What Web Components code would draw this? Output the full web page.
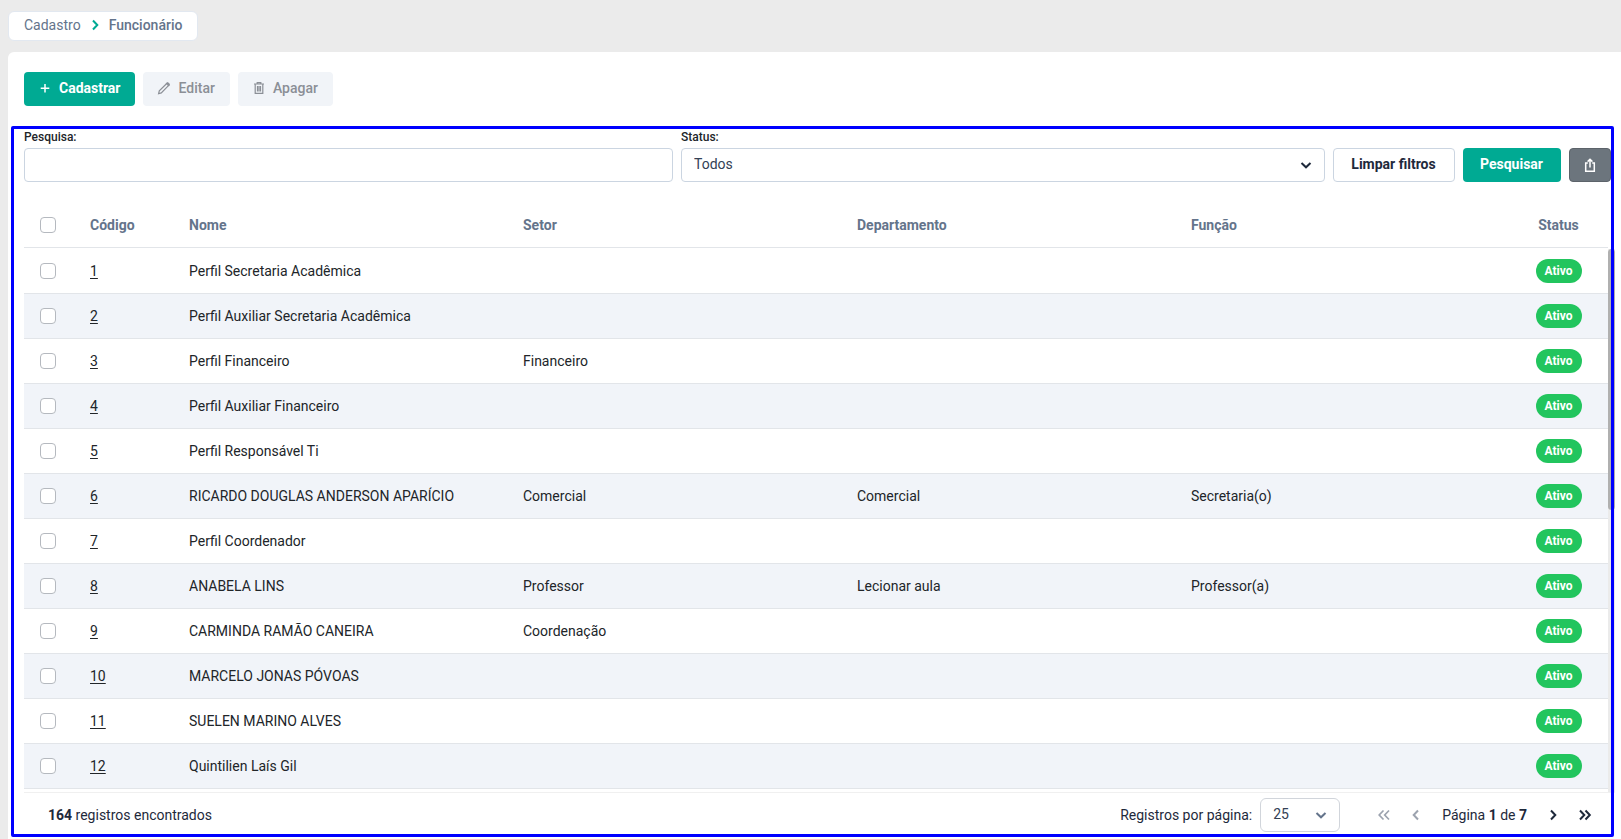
<!DOCTYPE html>
<html lang="pt-BR">
<head>
<meta charset="utf-8">
<title>Cadastro - Funcionário</title>
<style>
    body {
        margin: 0;
        background: #ebebeb;
        color: #212529;
        font: 14px/20px Roboto, "Liberation Sans", sans-serif;
    }
</style>
</head>
<body>

<pagina-cadastro></pagina-cadastro>

<script>
const icones = {
    mais: '<path d="M7 3v8.5M2.7 7.3h8.6" stroke-width="1.5"/>',
    lapis: '<path d="M1.6 12.6l.7-2.7L10 2.3q.8-.7 1.5 0l.4.4q.7.7 0 1.5L4.3 11.9z" stroke-width="1.2"/><path d="M9 2.6L11.6 5.200l1-1.200-2.200-2.400z" fill="currentColor" stroke-width=".5"/>',
    lixeira: '<path d="M2 3h10M5.200 2.800V1.700h3.600v1.100M3.200 3v9.300h7.600V3M5.500 5v5.500M7 5v5.500M8.500 5v5.500" stroke-width="1.2"/>',
    exportar: '<path d="M4.8 5H2.700v8.200h8.600V5H9.200M7 9.500V1.500M4.600 3.600L7 1.200l2.400 2.400" stroke-width="1.5"/>',
    direita: '<path d="M5 2.5L9.3 7 5 11.5" stroke-width="2"/>',
    esquerda: '<path d="M9 2.5L4.7 7 9 11.5" stroke-width="2"/>',
    primeira: '<path d="M6.5 2.5L2.2 7l4.3 4.5M12 2.5L7.7 7l4.3 4.5" stroke-width="1.7"/>',
    ultima: '<path d="M2 2.5L6.3 7 2 11.5M7.5 2.5L11.8 7l-4.3 4.5" stroke-width="2"/>',
    baixo: '<path d="M2.5 5L7 9.3 11.5 5" stroke-width="2"/>'
};

class IconeApp extends HTMLElement {

    constructor() {
        super();
        this.attachShadow({ mode: 'open' });
    }

    connectedCallback() {
        this.shadowRoot.innerHTML = `
            <style>
                :host { display: inline-flex; width: 14px; height: 14px; }
                svg { width: 100%; height: 100%; fill: none; stroke: currentColor; }
            </style>
            <svg viewBox="0 0 14 14" aria-hidden="true">${icones[this.getAttribute('nome')]}</svg>
        `;
    }
}

const template_botao = document.createElement('template');

template_botao.innerHTML = `
    <style>
        :host { display: inline-block; }

        button {
            display: flex;
            align-items: center;
            justify-content: center;
            gap: 7px;
            width: 100%;
            height: 34px;
            padding: 0 14px 2px 13px;
            border: 1px solid transparent;
            border-radius: 4px;
            font: 500 14px/20px Roboto, "Liberation Sans", sans-serif;
            white-space: nowrap;
            color: #8b8f96;
            background: #f1f4f8;
        }

        :host([tipo=primario]) button { background: #00aa93; color: white; font-weight: 700; }
        :host([tipo=contorno]) button { background: white; border-color: #cbd5e1; color: #1e293b; font-weight: 700; }
        :host([tipo=escuro]) button { background: #6c757d; border-color: #5c636a; color: white; padding: 0; }
    </style>

    <button type="button"><slot name="icone"></slot><slot></slot></button>
`;

class BotaoApp extends HTMLElement {

    constructor() {
        super();
        this.attachShadow({ mode: 'open' });
        this.shadowRoot.appendChild(template_botao.content.cloneNode(true));
    }

    connectedCallback() {
        const botao = this.shadowRoot.querySelector('button');

        botao.disabled = this.hasAttribute('desativado');

        if (this.getAttribute('rotulo')) {
            botao.setAttribute('aria-label', this.getAttribute('rotulo'));
        }
    }
}

const template_trilha = document.createElement('template');

template_trilha.innerHTML = `
    <style>
        :host { display: block; }

        nav {
            display: inline-flex;
            align-items: center;
            gap: 7px;
            box-sizing: border-box;
            height: 30px;
            padding: 0 15px 2px;
            border: 1px solid #e2e8f0;
            border-radius: 6px;
            background: white;
            color: #64748b;
        }

        a { color: inherit; text-decoration: none; }
        span { font-weight: 500; }
        icone-app { color: #00aa93; }
    </style>

    <nav aria-label="Trilha">
        <a href="#">Cadastro</a>
        <icone-app nome="direita"></icone-app>
        <span>Funcionário</span>
    </nav>
`;

class TrilhaNavegacao extends HTMLElement {

    constructor() {
        super();
        this.attachShadow({ mode: 'open' });
        this.shadowRoot.appendChild(template_trilha.content.cloneNode(true));
    }
}

const template_filtros = document.createElement('template');

template_filtros.innerHTML = `
    <style>
        :host { display: flex; align-items: flex-end; gap: 8px; }

        .campo { flex: 128; min-width: 0; }
        .campo.pesquisa { flex: 129; }

        label {
            display: block;
            padding-bottom: 3px;
            font-size: 12px;
            line-height: 16px;
            font-weight: 500;
        }

        input, select {
            display: block;
            box-sizing: border-box;
            width: 100%;
            height: 34px;
            padding: 0 12px 2px;
            border: 1px solid #cbd5e1;
            border-radius: 4px;
            background: white;
            color: #334155;
            font: inherit;
            appearance: none;
        }

        .selecao { display: grid; align-items: center; }
        .selecao > * { grid-area: 1 / 1; }
        .selecao icone-app { justify-self: end; margin-right: 12px; color: #1e293b; pointer-events: none; }

        .limpar { width: 122px; }
        .pesquisar { width: 98px; }
        .exportar { width: 42px; }
    </style>

    <div class="campo pesquisa">
        <label for="pesquisa">Pesquisa:</label>
        <input id="pesquisa" type="text">
    </div>

    <div class="campo">
        <label for="status">Status:</label>
        <div class="selecao">
            <select id="status"><option>Todos</option><option>Ativo</option><option>Inativo</option></select>
            <icone-app nome="baixo"></icone-app>
        </div>
    </div>

    <botao-app class="limpar" tipo="contorno">Limpar filtros</botao-app>
    <botao-app class="pesquisar" tipo="primario">Pesquisar</botao-app>
    <botao-app class="exportar" tipo="escuro" rotulo="Exportar"><icone-app slot="icone" nome="exportar"></icone-app></botao-app>
`;

class FiltrosBusca extends HTMLElement {

    constructor() {
        super();
        this.attachShadow({ mode: 'open' });
        this.shadowRoot.appendChild(template_filtros.content.cloneNode(true));
    }
}

const funcionarios = [
    [1, 'Perfil Secretaria Acadêmica', '', '', ''],
    [2, 'Perfil Auxiliar Secretaria Acadêmica', '', '', ''],
    [3, 'Perfil Financeiro', 'Financeiro', '', ''],
    [4, 'Perfil Auxiliar Financeiro', '', '', ''],
    [5, 'Perfil Responsável Ti', '', '', ''],
    [6, 'RICARDO DOUGLAS ANDERSON APARÍCIO', 'Comercial', 'Comercial', 'Secretaria(o)'],
    [7, 'Perfil Coordenador', '', '', ''],
    [8, 'ANABELA LINS', 'Professor', 'Lecionar aula', 'Professor(a)'],
    [9, 'CARMINDA RAMÃO CANEIRA', 'Coordenação', '', ''],
    [10, 'MARCELO JONAS PÓVOAS', '', '', ''],
    [11, 'SUELEN MARINO ALVES', '', '', ''],
    [12, 'Quintilien Laís Gil', '', '', '']
];

const template_tabela = document.createElement('template');

template_tabela.innerHTML = `
    <style>
        :host { display: flex; }

        .area { flex: 1; min-width: 0; padding-bottom: 3px; }

        table {
            width: 100%;
            table-layout: fixed;
            border-collapse: separate;
            border-spacing: 0;
        }

        th, td {
            height: 24px;
            padding: 10px 16px;
            border-bottom: 1px solid #e2e5e9;
            text-align: left;
            white-space: nowrap;
        }

        th { color: #64748b; font-weight: 700; }
        tbody tr:first-child td { padding-top: 11px; }
        tbody tr:nth-child(even) { background: #f1f4f9; }

        .marca { width: 18px; }
        .codigo, .status { width: 67px; }
        .status { text-align: center; }

        a { color: inherit; text-underline-offset: 2px; }

        input {
            display: block;
            appearance: none;
            box-sizing: border-box;
            width: 16px;
            height: 16px;
            margin: 0;
            border: 1px solid #b5b9bf;
            border-radius: 4px;
            background: white;
        }

        .etiqueta {
            display: block;
            width: 46px;
            margin: 0 auto;
            border-radius: 12px;
            background: #22c55e;
            color: white;
            font-size: 12px;
            line-height: 24px;
            font-weight: 700;
        }

        .trilho {
            width: 7px;
            margin-top: 46px;
            background: #ebebeb;
        }

        .trilho div { height: 48%; border-radius: 4px; background: #b0b0b0; }
    </style>

    <div class="area">
        <table>
            <thead>
                <tr>
                    <th class="marca"><input type="checkbox" aria-label="Selecionar todos"></th>
                    <th class="codigo">Código</th>
                    <th>Nome</th>
                    <th>Setor</th>
                    <th>Departamento</th>
                    <th>Função</th>
                    <th class="status">Status</th>
                </tr>
            </thead>
            <tbody></tbody>
        </table>
    </div>
    <div class="trilho"><div></div></div>
`;

class TabelaFuncionarios extends HTMLElement {

    constructor() {
        super();
        this.attachShadow({ mode: 'open' });
        this.shadowRoot.appendChild(template_tabela.content.cloneNode(true));
    }

    connectedCallback() {
        this.shadowRoot.querySelector('tbody').innerHTML = funcionarios.map(([codigo, nome, setor, departamento, funcao]) => `
            <tr>
                <td><input type="checkbox" aria-label="Selecionar ${nome}"></td>
                <td><a href="#${codigo}">${codigo}</a></td>
                <td>${nome}</td>
                <td>${setor}</td>
                <td>${departamento}</td>
                <td>${funcao}</td>
                <td class="status"><span class="etiqueta">Ativo</span></td>
            </tr>
        `).join('');
    }
}

const template_paginacao = document.createElement('template');

template_paginacao.innerHTML = `
    <style>
        :host {
            display: flex;
            align-items: center;
            justify-content: space-between;
            padding: 5px 14px 2px 24px;
            border-top: 1px solid #f0f0f0;
            color: #1e293b;
        }

        div, label { display: flex; align-items: center; }
        label { gap: 8px; margin-right: 28px; }
        .selecao { display: grid; align-items: center; }
        .selecao > * { grid-area: 1 / 1; }
        .selecao icone-app { justify-self: end; margin-right: 12px; color: #64748b; pointer-events: none; }

        select {
            width: 80px;
            height: 34px;
            padding: 0 12px 2px;
            border: 1px solid #d1d5db;
            border-radius: 6px;
            background: white;
            color: #334155;
            font: inherit;
            appearance: none;
        }

        button {
            display: flex;
            align-items: center;
            justify-content: center;
            width: 32px;
            height: 32px;
            padding: 0;
            border: 0;
            background: none;
            color: #1e293b;
        }

        button:disabled { color: #9ca3af; }
        .pagina { padding: 0 10px; }
        b { font-weight: 700; }
    </style>

    <span><b>164</b> registros encontrados</span>
    <div>
        <label>Registros por página:
            <span class="selecao">
                <select><option>25</option><option>50</option><option>100</option></select>
                <icone-app nome="baixo"></icone-app>
            </span>
        </label>
        <button type="button" aria-label="Primeira página" disabled><icone-app nome="primeira"></icone-app></button>
        <button type="button" aria-label="Página anterior" disabled><icone-app nome="esquerda"></icone-app></button>
        <span class="pagina">Página <b>1</b> de <b>7</b></span>
        <button type="button" aria-label="Próxima página"><icone-app nome="direita"></icone-app></button>
        <button type="button" aria-label="Última página"><icone-app nome="ultima"></icone-app></button>
    </div>
`;

class PaginacaoTabela extends HTMLElement {

    constructor() {
        super();
        this.attachShadow({ mode: 'open' });
        this.shadowRoot.appendChild(template_paginacao.content.cloneNode(true));
    }
}

const template_pagina = document.createElement('template');

template_pagina.innerHTML = `
    <style>
        :host {
            display: flex;
            flex-direction: column;
            box-sizing: border-box;
            min-height: 100vh;
            padding: 11px 0 0 8px;
            gap: 11px;
        }

        main {
            flex: 1;
            padding: 20px 6px 2px 3px;
            border-radius: 6px 0 0 0;
            background: white;
        }

        .acoes { display: flex; gap: 8px; padding: 0 13px 20px; }

        .lista { position: relative; padding: 3px 0 3px 13px; }

        /* moldura de destaque, por cima da barra de rolagem */
        .lista::after {
            content: "";
            position: absolute;
            inset: 0 1px 0 0;
            border: 3px solid #0000ff;
            border-radius: 2px;
            pointer-events: none;
        }

        filtros-busca { padding: 0 4px 21px 0; }
    </style>

    <trilha-navegacao></trilha-navegacao>
    <main>
        <div class="acoes">
            <botao-app tipo="primario"><icone-app slot="icone" nome="mais"></icone-app>Cadastrar</botao-app>
            <botao-app desativado><icone-app slot="icone" nome="lapis"></icone-app>Editar</botao-app>
            <botao-app desativado><icone-app slot="icone" nome="lixeira"></icone-app>Apagar</botao-app>
        </div>
        <section class="lista">
            <filtros-busca></filtros-busca>
            <tabela-funcionarios></tabela-funcionarios>
            <paginacao-tabela></paginacao-tabela>
        </section>
    </main>
`;

class PaginaCadastro extends HTMLElement {

    constructor() {
        super();
        this.attachShadow({ mode: 'open' });
        this.shadowRoot.appendChild(template_pagina.content.cloneNode(true));
    }
}

window.customElements.define('icone-app', IconeApp);
window.customElements.define('botao-app', BotaoApp);
window.customElements.define('trilha-navegacao', TrilhaNavegacao);
window.customElements.define('filtros-busca', FiltrosBusca);
window.customElements.define('tabela-funcionarios', TabelaFuncionarios);
window.customElements.define('paginacao-tabela', PaginacaoTabela);
window.customElements.define('pagina-cadastro', PaginaCadastro);
</script>
</body>
</html>
